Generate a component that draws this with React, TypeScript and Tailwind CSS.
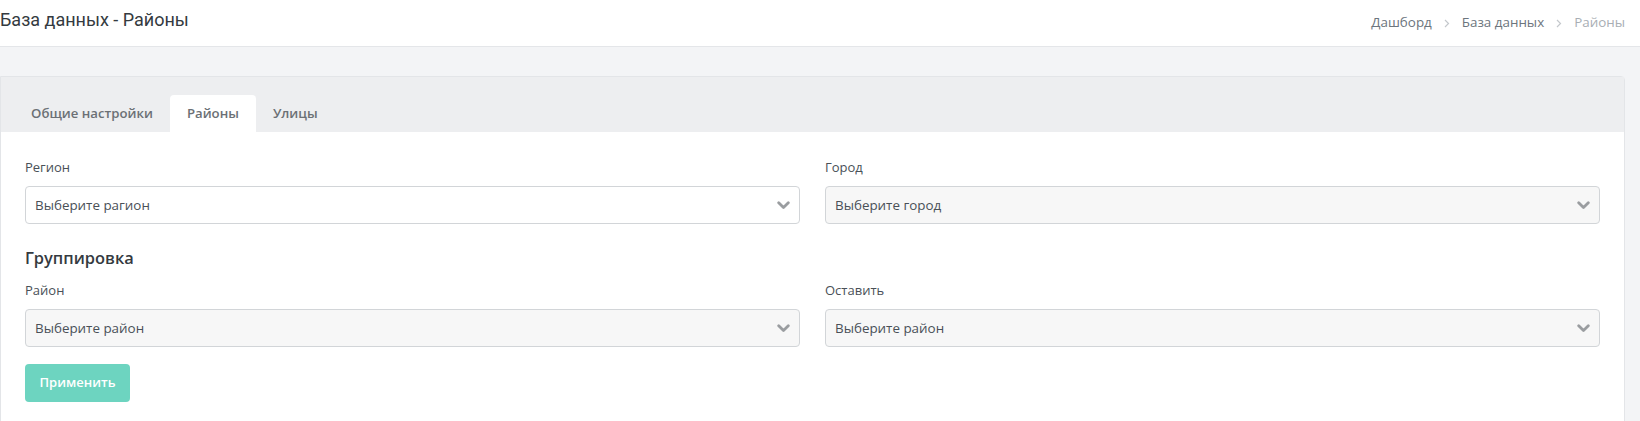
import React from "react";

function Chevron() {
  return (
    <svg width="13" height="9" viewBox="0 0 13 9" className="shrink-0">
      <path d="M1.7 1.7 L6.5 6.5 L11.3 1.7" fill="none" stroke="#9a9da0" strokeWidth="2.8" strokeLinecap="round" strokeLinejoin="round" />
    </svg>
  );
}

function Crumb() {
  return (
    <svg width="6" height="9" viewBox="0 0 6 9" className="mx-[12px]">
      <path d="M1 1 L4.5 4.5 L1 8" fill="none" stroke="#c4c8cc" strokeWidth="1.2" />
    </svg>
  );
}

function Select({ text, white }: { text: string; white?: boolean }) {
  return (
    <div
      className={
        "h-[38px] rounded-[4px] border border-[#d2d5d8] flex items-center justify-between pl-[9px] pr-[9px] " +
        (white ? "bg-white" : "bg-[#f7f7f7]")
      }
    >
      <span className="text-[13.4px] text-[#495057]">{text}</span>
      <Chevron />
    </div>
  );
}

function Field({ label, text, white }: { label: string; text: string; white?: boolean }) {
  return (
    <div className="flex flex-col">
      <label className="text-[13px] leading-[20px] text-[#495057] mb-[9px]">{label}</label>
      <Select text={text} white={white} />
    </div>
  );
}

function Tab({ label, active }: { label: string; active?: boolean }) {
  return (
    <div
      className={
        "h-[37px] px-[17px] flex items-center text-[13.2px] font-semibold text-[#6b7075] " +
        (active ? "bg-white rounded-t-[4px]" : "")
      }
    >
      {label}
    </div>
  );
}

export default function App() {
  return (
    <div className="w-[1640px] h-[421px] overflow-hidden bg-[#f3f4f6] font-['Open_Sans',sans-serif]">
      <header className="h-[47px] bg-white border-b border-[#e4e6e9] flex items-center justify-between pr-[15px]">
        <h1 className="font-['Roboto',sans-serif] text-[18px] text-[#343a40] leading-none -mt-[6px]">
          База данных - Районы
        </h1>
        <nav className="flex items-center text-[13.4px] leading-none">
          <span className="text-[#6c757d]">Дашборд</span>
          <Crumb />
          <span className="text-[#6c757d]">База данных</span>
          <Crumb />
          <span className="text-[#a8aeb4]">Районы</span>
        </nav>
      </header>

      <div className="pt-[29px] pr-[15px]">
        <div className="bg-white border border-[#e3e5e8] rounded-tr-[4px]">
          <div className="h-[55px] bg-[#edeef0] flex items-end pl-[13px]">
            <Tab label="Общие настройки" />
            <Tab label="Районы" active />
            <Tab label="Улицы" />
          </div>

          <div className="pl-[24px] pr-[24px] pt-[25px] pb-[20px]">
            <div className="grid grid-cols-2 gap-x-[25px]">
              <Field label="Регион" text="Выберите рагион" white />
              <Field label="Город" text="Выберите город" />
            </div>

            <h2 className="mt-[22px] text-[16.4px] leading-[24px] font-semibold text-[#343a40]">
              Группировка
            </h2>

            <div className="grid grid-cols-2 gap-x-[25px] mt-[10px]">
              <Field label="Район" text="Выберите район" />
              <Field label="Оставить" text="Выберите район" />
            </div>

            <button className="mt-[17px] h-[38px] w-[105px] rounded-[4px] bg-[#6dd4c0] text-white text-[13px] font-semibold">
              Применить
            </button>
          </div>
        </div>
      </div>
    </div>
  );
}
